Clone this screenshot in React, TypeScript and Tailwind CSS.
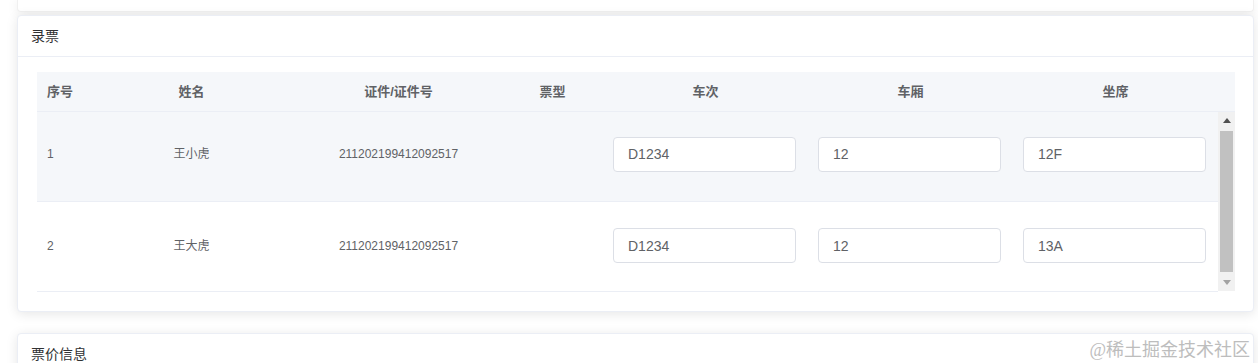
import React from "react";

const font = { fontFamily: '"Liberation Sans", Arial, "Noto Sans CJK SC", sans-serif' };

const rows = [
  { no: "1", name: "王小虎", id: "211202199412092517", train: "D1234", car: "12", seat: "12F", bg: "bg-[#f5f7fa] pb-[5px]" },
  { no: "2", name: "王大虎", id: "211202199412092517", train: "D1234", car: "12", seat: "13A", bg: "bg-white pb-[2px]" },
];

function Cell({ children }: { children: React.ReactNode }) {
  return <div className="flex items-center justify-center px-[10px]">{children}</div>;
}

function Field({ value }: { value: string }) {
  return (
    <div className="flex items-center pl-[10px] pr-[12px] w-full">
      <input
        readOnly
        defaultValue={value}
        className="w-full h-[35px] border border-[#dcdfe6] rounded-[4px] bg-white px-[14px] text-[14px] text-[#606266] outline-none"
        style={font}
      />
    </div>
  );
}

const cols = "grid grid-cols-[51px_207px_207px_101px_205px_205px_205px]";

export default function App() {
  return (
    <div className="relative w-[1258px] h-[363px] overflow-hidden bg-white pl-[17px] pr-[4px]" style={font}>
      {/* previous card bottom */}
      <div className="h-[12px] bg-white rounded-b-[4px] border border-t-0 border-[#f0f0f0] shadow-[0_2px_12px_0_rgba(0,0,0,0.08)]" />

      {/* 录票 card */}
      <div className="mt-[3px] bg-white rounded-[4px] border border-[#ebeef5] shadow-[0_2px_12px_0_rgba(0,0,0,0.1)]">
        <div className="h-[41px] flex items-center px-[13px] border-b border-[#ebeef5] text-[14px] text-[#303133]">
          录票
        </div>
        <div className="pt-[15px] pb-[19px] pl-[19px] pr-[18px]">
          {/* header */}
          <div className="flex h-[40px] bg-[#f5f7fa] border-b border-[#ebeef5] text-[13px] font-bold text-[#606266]">
            <div className={cols + " w-[1181px]"}>
              <div className="flex items-center pl-[10px]">序号</div>
              <Cell>姓名</Cell>
              <Cell>证件/证件号</Cell>
              <Cell>票型</Cell>
              <Cell>车次</Cell>
              <Cell>车厢</Cell>
              <Cell>坐席</Cell>
            </div>
            <div className="w-[17px]" />
          </div>
          {/* body */}
          <div className="flex h-[180px]">
            <div className="w-[1181px] flex flex-col">
              {rows.map((r) => (
                <div key={r.no} className={cols + " h-[90px] border-b border-[#ebeef5] text-[12px] text-[#606266] " + r.bg}>
                  <div className="flex items-center pl-[10px]">{r.no}</div>
                  <Cell>{r.name}</Cell>
                  <Cell>{r.id}</Cell>
                  <Cell>{""}</Cell>
                  <Field value={r.train} />
                  <Field value={r.car} />
                  <Field value={r.seat} />
                </div>
              ))}
            </div>
            {/* scrollbar */}
            <div className="w-[17px] h-[179px] bg-[#f1f1f1] flex flex-col">
              <div className="h-[17px] flex items-center justify-center">
                <svg width="8" height="5" viewBox="0 0 8 5"><path d="M0 5 L4 0 L8 5 Z" fill="#505050" /></svg>
              </div>
              <div className="flex-1 px-[2px] py-[2px]">
                <div className="h-full bg-[#c1c1c1]" />
              </div>
              <div className="h-[17px] flex items-center justify-center">
                <svg width="8" height="5" viewBox="0 0 8 5"><path d="M0 0 L8 0 L4 5 Z" fill="#a3a3a3" /></svg>
              </div>
            </div>
          </div>
        </div>
      </div>

      {/* 票价信息 card */}
      <div className="mt-[21px] h-[120px] bg-white rounded-[4px] border border-[#ebeef5] shadow-[0_2px_12px_0_rgba(0,0,0,0.1)]">
        <div className="h-[41px] flex items-center px-[13px] border-b border-[#ebeef5] text-[14px] text-[#303133]">
          票价信息
        </div>
      </div>

      {/* watermark */}
      <div
        className="absolute right-[8px] bottom-[4px] text-[18px] text-[#bdbdbd] leading-none"
        style={{ fontFamily: '"Liberation Serif", "Noto Sans CJK SC", serif' }}
      >
        @稀土掘金技术社区
      </div>
    </div>
  );
}
